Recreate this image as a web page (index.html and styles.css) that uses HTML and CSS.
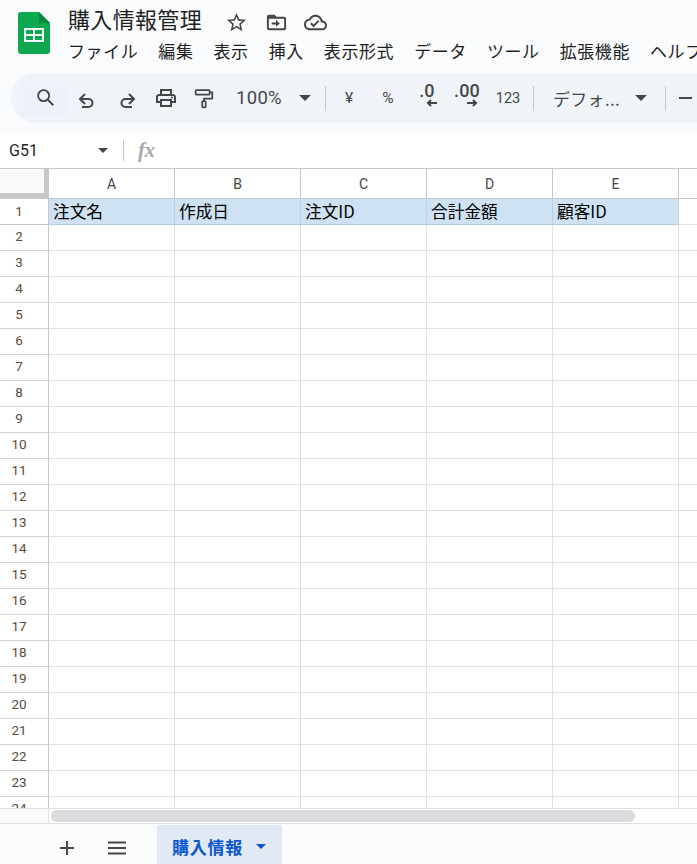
FILE: index.html
```html
<!DOCTYPE html>
<html lang="ja">
<head>
<meta charset="utf-8">
<title>購入情報管理</title>
<link rel="stylesheet" href="styles.css">
</head>
<body>
<div class="app">
  <header class="head">
    <svg class="logo" viewBox="0 0 32 42" aria-hidden="true">
      <path class="logo-sheet" d="M3 0h18l11 11v28a3 3 0 0 1-3 3H3a3 3 0 0 1-3-3V3a3 3 0 0 1 3-3z"/>
      <path class="logo-fold" d="M21 0l11 11H21z"/>
      <path class="logo-table" fill-rule="evenodd" d="M6 16h20v14H6zM8 18v4h7v-4zM17 18v4h7v-4zM8 24v4h7v-4zM17 24v4h7v-4z"/>
    </svg>
    <div class="head-main">
      <div class="title-row">
        <span class="title">購入情報管理</span>
        <svg class="t-icon star" viewBox="0 0 24 24"><path d="M22 9.24l-7.19-.62L12 2 9.19 8.63 2 9.24l5.46 4.73L5.82 21 12 17.27 18.18 21l-1.63-7.03L22 9.24zM12 15.4l-3.76 2.27 1-4.28-3.32-2.88 4.38-.38L12 6.1l1.71 4.04 4.38.38-3.32 2.88 1 4.28L12 15.4z"/></svg>
        <svg class="t-icon folder" viewBox="0 0 24 24"><path d="M20 6h-8l-2-2H4c-1.100 0-2 .9-2 2v12c0 1.100.9 2 2 2h16c1.100 0 2-.9 2-2V8c0-1.100-.9-2-2-2zm0 12H4V8h16v10zm-8.500-1.500l4-3.500-4-3.500v2.500H7v2h4.500v2.500z"/></svg>
        <svg class="t-icon cloud" viewBox="0 0 24 24"><path d="M19.350 10.040C18.670 6.590 15.640 4 12 4 9.110 4 6.600 5.640 5.350 8.040 2.340 8.360 0 10.910 0 14c0 3.310 2.690 6 6 6h13c2.760 0 5-2.240 5-5 0-2.640-2.050-4.780-4.650-4.960zM19 18H6c-2.210 0-4-1.790-4-4 0-2.050 1.530-3.760 3.560-3.970l1.070-.11.500-.950C8.080 7.140 9.940 6 12 6c2.620 0 4.880 1.860 5.390 4.430l.300 1.500 1.530.110c1.560.100 2.780 1.410 2.780 2.960 0 1.650-1.350 3-3 3zm-9-3.820l-2.090-2.090L6.500 13.500 10 17l6.010-6.010-1.410-1.410z"/></svg>
      </div>
      <nav class="menu">
        <span>ファイル</span><span>編集</span><span>表示</span><span>挿入</span><span>表示形式</span><span>データ</span><span>ツール</span><span>拡張機能</span><span>ヘルプ</span>
      </nav>
    </div>
  </header>

  <div class="toolbar">
    <div class="btn search">
      <svg class="line" viewBox="0 0 24 24"><circle cx="10.500" cy="10.500" r="6"/><path d="M15 15l6 6"/></svg>
    </div>
    <div class="btn undo"><svg class="line" viewBox="0 0 24 24"><path d="M10 8l-5 5 5 5M5 13h8.500a4 4 0 0 1 0 8H7"/></svg></div>
    <div class="btn redo"><svg class="line" viewBox="0 0 24 24"><path d="M14 8l5 5-5 5M19 13h-8.500a4 4 0 0 0 0 8H17"/></svg></div>
    <div class="btn print"><svg class="fill" viewBox="0 0 24 24"><path d="M19 8h-1V3H6v5H5c-1.660 0-3 1.340-3 3v6h4v4h12v-4h4v-6c0-1.660-1.340-3-3-3zM8 5h8v3H8V5zm8 12v2H8v-4h8v2zm2-2v-2H6v2H4v-4c0-.550.450-1 1-1h14c.550 0 1 .450 1 1v4h-2z"/><circle cx="18" cy="11.500" r="1"/></svg></div>
    <div class="btn paint"><svg class="line" viewBox="0 0 24 24"><rect x="3" y="2.500" width="16" height="5" rx="1"/><path d="M19 5h3v7h-9.500v3"/><rect x="10.500" y="15" width="4" height="7" rx="1"/></svg></div>
    <div class="zoom-val">100%</div>
    <div class="caret zoom-caret"></div>
    <div class="sep"></div>
    <div class="btn glyph yen">¥</div>
    <div class="btn glyph pct">%</div>
    <div class="btn dec dec-first">
      <span class="dec-num">.0</span>
      <svg class="dec-arrow" viewBox="0 0 12 8"><path d="M11 4H2M5 1L2 4l3 3"/></svg>
    </div>
    <div class="btn dec">
      <span class="dec-num">.00</span>
      <svg class="dec-arrow" viewBox="0 0 12 8"><path d="M1 4h9M7 1l3 3-3 3"/></svg>
    </div>
    <div class="btn glyph num">123</div>
    <div class="sep sep-b"></div>
    <div class="font-val">デフォ...</div>
    <div class="caret font-caret"></div>
    <div class="sep sep-c"></div>
    <div class="minus"></div>
  </div>

  <div class="formula">
    <div class="namebox">G51</div>
    <div class="caret name-caret"></div>
    <div class="f-sep"></div>
    <div class="fx">fx</div>
  </div>

  <div class="grid">
    <table class="sheet">
      <colgroup><col class="c-head"><col class="c-cell"><col class="c-cell"><col class="c-cell"><col class="c-cell"><col class="c-cell"><col class="c-rest"></colgroup>
      <thead>
        <tr><th class="corner"><div class="corner-fill"></div></th><th>A</th><th>B</th><th>C</th><th>D</th><th>E</th><th></th></tr>
      </thead>
      <tbody>
        <tr class="first"><th>1</th><td>注文名</td><td>作成日</td><td>注文ID</td><td>合計金額</td><td>顧客ID</td><td class="plain"></td></tr>
        <tr><th>2</th><td></td><td></td><td></td><td></td><td></td><td></td></tr>
        <tr><th>3</th><td></td><td></td><td></td><td></td><td></td><td></td></tr>
        <tr><th>4</th><td></td><td></td><td></td><td></td><td></td><td></td></tr>
        <tr><th>5</th><td></td><td></td><td></td><td></td><td></td><td></td></tr>
        <tr><th>6</th><td></td><td></td><td></td><td></td><td></td><td></td></tr>
        <tr><th>7</th><td></td><td></td><td></td><td></td><td></td><td></td></tr>
        <tr><th>8</th><td></td><td></td><td></td><td></td><td></td><td></td></tr>
        <tr><th>9</th><td></td><td></td><td></td><td></td><td></td><td></td></tr>
        <tr><th>10</th><td></td><td></td><td></td><td></td><td></td><td></td></tr>
        <tr><th>11</th><td></td><td></td><td></td><td></td><td></td><td></td></tr>
        <tr><th>12</th><td></td><td></td><td></td><td></td><td></td><td></td></tr>
        <tr><th>13</th><td></td><td></td><td></td><td></td><td></td><td></td></tr>
        <tr><th>14</th><td></td><td></td><td></td><td></td><td></td><td></td></tr>
        <tr><th>15</th><td></td><td></td><td></td><td></td><td></td><td></td></tr>
        <tr><th>16</th><td></td><td></td><td></td><td></td><td></td><td></td></tr>
        <tr><th>17</th><td></td><td></td><td></td><td></td><td></td><td></td></tr>
        <tr><th>18</th><td></td><td></td><td></td><td></td><td></td><td></td></tr>
        <tr><th>19</th><td></td><td></td><td></td><td></td><td></td><td></td></tr>
        <tr><th>20</th><td></td><td></td><td></td><td></td><td></td><td></td></tr>
        <tr><th>21</th><td></td><td></td><td></td><td></td><td></td><td></td></tr>
        <tr><th>22</th><td></td><td></td><td></td><td></td><td></td><td></td></tr>
        <tr><th>23</th><td></td><td></td><td></td><td></td><td></td><td></td></tr>
        <tr><th>24</th><td></td><td></td><td></td><td></td><td></td><td></td></tr>
      </tbody>
    </table>
  </div>

  <div class="scroll">
    <div class="scroll-stub"></div>
    <div class="scroll-track"><div class="thumb"></div></div>
  </div>

  <footer class="tabs">
    <svg class="tab-icon plus" viewBox="0 0 24 24"><path d="M12 5v14M5 12h14"/></svg>
    <svg class="tab-icon list" viewBox="0 0 24 24"><path d="M3 6.500h18M3 12h18M3 17.500h18"/></svg>
    <div class="tab"><span class="tab-name">購入情報</span><div class="caret tab-caret"></div></div>
  </footer>
</div>
</body>
</html>
```

FILE: styles.css
```css
* { box-sizing: border-box; }
html, body { margin: 0; height: 100%; overflow: hidden; }
body {
  background: #f9fbfd;
  color: #1f1f1f;
  font-family: "Roboto", "Noto Sans CJK JP", sans-serif;
}
.app { display: flex; flex-direction: column; height: 864px; width: 697px; overflow: hidden; }

/* header */
.head { display: flex; height: 73px; flex: none; padding-left: 18px; }
.logo { width: 32px; height: 42px; margin-top: 12px; flex: none; }
.logo-sheet { fill: #0da850; }
.logo-fold { fill: #0b8a3f; }
.logo-table { fill: #f2fbf5; }
.head-main { margin-left: 18px; white-space: nowrap; }
.title-row { display: flex; align-items: center; height: 30px; margin-top: 7px; }
.title { font-size: 22px; letter-spacing: .33px; line-height: 30px; padding-bottom: 8px; height: 30px; font-family: "Noto Sans CJK JP", sans-serif; display: flex; align-items: center; }
.t-icon { width: 23px; height: 23px; fill: #444746; flex: none; }
.star { margin-left: 23px; }
.folder { margin-left: 17px; }
.cloud { margin-left: 16px; }
.menu { display: flex; gap: 20px; margin-top: 1px; font-size: 17px; letter-spacing: .58px; line-height: 26px; font-family: "Noto Sans CJK JP", sans-serif; }

/* toolbar */
.toolbar {
  display: flex; align-items: center; flex: none;
  height: 50px; margin-left: 11px; padding-left: 11px;
  background: #f0f4f9; border-radius: 25px 0 0 25px;
  color: #444746; white-space: nowrap;
}
.btn { width: 40px; height: 34px; display: flex; align-items: center; justify-content: center; flex: none; }
.btn svg { width: 24px; height: 24px; }
.search { width: 47px; margin-right: -2px; background: #edf2fa; margin-top: 1px; }
.btn.search svg { width: 22px; height: 22px; margin-top: -3px; margin-left: -1px; }
.print { margin-left: -1px; }
.paint { margin-left: -1px; }
.btn.paint svg { width: 21px; height: 21px; margin-left: -3px; }
.line { fill: none; stroke: #444746; stroke-width: 2; }
.fill { fill: #444746; }
.zoom-val { margin-left: 11px; width: 46px; font-size: 18.500px; letter-spacing: .3px; color: #444746; }
.caret { width: 0; height: 0; flex: none; border-left: 6px solid transparent; border-right: 6px solid transparent; border-top: 6px solid #444746; }
.zoom-caret { margin-left: 17px; }
.sep { width: 1px; height: 25px; background: #c7c7c7; flex: none; margin-left: 14px; margin-right: 3px; }
.glyph { font-size: 14px; }
.yen { font-size: 15.500px; }
.pct { font-size: 15.500px; margin-left: -1px; }
.dec { flex-direction: column; }
.dec-first { margin-left: -1px; }
.dec-num { font-size: 18px; font-weight: 500; letter-spacing: .2px; line-height: 16px; margin-top: -6px; }
.btn .dec-arrow { width: 12px; height: 8px; margin-top: 0; margin-left: 9px; fill: none; stroke: #444746; stroke-width: 2; }
.num { font-size: 14.500px; margin-left: 1px; }
.sep-b { margin-left: 5px; margin-right: 0; }
.font-val { margin-left: 19px; width: 66px; font-size: 17px; font-family: "Noto Sans CJK JP", sans-serif; letter-spacing: .3px; overflow: hidden; }
.font-caret { margin-left: 16px; }
.sep-c { margin-left: 18px; margin-right: 0; }
.minus { width: 13px; height: 2px; background: #444746; margin-left: 13px; flex: none; }

/* formula bar */
.formula { display: flex; align-items: center; flex: none; height: 36px; margin-top: 10px; background: #fff; border-bottom: 1px solid #c7c7c7; }
.namebox { margin-left: 9px; width: 89px; font-size: 16px; color: #1f1f1f; }
.name-caret { border-left-width: 5px; border-right-width: 5px; border-top-width: 5px; }
.f-sep { width: 1px; height: 21px; background: #c7c7c7; margin-left: 15px; }
.fx { margin-left: 14px; font-family: "Liberation Serif", serif; font-style: italic; font-weight: 700; font-size: 21px; color: #a6a9ad; letter-spacing: -.5px; }

/* grid */
.grid { height: 639px; flex: none; overflow: hidden; background: #fff; }
.sheet { border-collapse: separate; border-spacing: 0; table-layout: fixed; width: 698px; }
.c-head { width: 49px; }
.c-cell { width: 126px; }
.c-rest { width: 19px; }
.sheet th { font-weight: 400; font-size: 14px; color: #444746; padding: 0; border-right: 1px solid #c7c7c7; border-bottom: 1px solid #c7c7c7; background: #fff; overflow: hidden; }
.sheet thead th { height: 30px; }
.sheet tbody th { height: 26px; padding: 0 10px 3px 0; font-size: 13.500px; color: #5b4b3a; border-bottom-color: #d4d4d4; }
.sheet thead th:last-child { border-right: 0; }
.sheet td { height: 26px; padding: 0 0 0 4px; border-right: 1px solid #e1e1e1; border-bottom: 1px solid #e1e1e1; font-size: 16.700px; line-height: 25px; color: #000; font-family: "Noto Sans CJK JP", sans-serif; white-space: nowrap; overflow: hidden; }
.first td { background: #cfe2f3; border-right-color: #bdd0e2; border-bottom-color: #b8cbdd; }
.first .plain { background: #fff; border-right: 0; border-bottom-color: #e1e1e1; }
.sheet .first th { border-bottom-color: #c7c7c7; padding-bottom: 2px; }
.corner { vertical-align: top; }
.corner-fill { height: 24px; width: 44px; background: #f8f9fa; }
.sheet .corner { background: #c7c7c7; border-color: #c7c7c7; }

/* scrollbar */
.scroll { display: flex; height: 16px; flex: none; background: #f8f9fa; border-top: 1px solid #e1e1e1; border-bottom: 1px solid #e1e1e1; }
.scroll-stub { width: 49px; border-right: 1px solid #e1e1e1; flex: none; }
.scroll-track { flex: 1; padding: 1px 0 0 2px; background: #fff; }
.thumb { width: 584px; height: 12px; border-radius: 6px; background: #dadce0; }

/* tabs */
.tabs { display: flex; align-items: flex-start; flex: none; height: 40px; padding-left: 55px; }
.tab-icon { width: 24px; height: 24px; fill: none; stroke: #444746; stroke-width: 2; flex: none; margin-top: 12px; }
.list { margin-left: 26px; }
.tab { display: flex; align-items: center; margin-left: 28px; margin-top: 1px; padding-left: 15px; width: 125px; height: 39px; background: #e1e9f5; color: #0b57d0; font-size: 17px; font-weight: 700; letter-spacing: .75px; font-family: "Noto Sans CJK JP", sans-serif; }
.tab-name { padding-top: 4px; }
.tab-caret { margin-left: 13px; margin-top: 3px; border-left-width: 5.500px; border-right-width: 5.500px; border-top-width: 5.500px; border-top-color: #0b57d0; }
```
